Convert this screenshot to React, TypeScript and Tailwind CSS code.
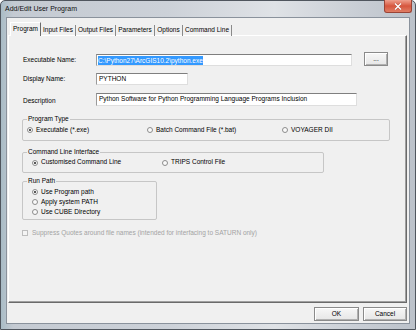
import React from 'react';

const tabs: [string, number][] = [
  ['Program', 31],
  ['Input Files', 35],
  ['Output Files', 40],
  ['Parameters', 39],
  ['Options', 28],
  ['Command Line', 49],
];

const Radio = ({
  checked = false,
  label,
  className = '',
}: {
  checked?: boolean;
  label: string;
  className?: string;
}) => (
  <div className={`flex items-center ${className}`}>
    <span className="flex h-[6px] w-[6px] shrink-0 items-center justify-center rounded-full border border-[#8c8c8c] bg-[#fafafa]">
      {checked && <span className="h-[2px] w-[2px] rounded-full bg-[#222]" />}
    </span>
    <span className="ml-[3px] leading-none">{label}</span>
  </div>
);

const GroupBox = ({
  title,
  className = '',
  children,
}: {
  title: string;
  className?: string;
  children: React.ReactNode;
}) => (
  <div className={`relative rounded-[2px] border border-[#c6c6c6] ${className}`}>
    <span className="absolute left-[4px] top-[-4px] bg-[#f0f0f0] px-[1px] leading-none">{title}</span>
    {children}
  </div>
);

const fieldBorder =
  'border border-t-[#7f7f7f] border-l-[#9a9a9a] border-r-[#dedede] border-b-[#dedede] bg-white';

const buttonStyle =
  'flex items-center justify-center border border-[#8a8a8a] bg-[linear-gradient(180deg,#f7f7f7,#e6e6e6)] shadow-[inset_1px_1px_#ffffff,inset_-1px_-1px_#b0b0b0]';

export default function App() {
  return (
    <div className="font-['Liberation_Sans',Arial,sans-serif] text-[6.5px] text-black">
      <div className="flex h-[330px] w-[416px] flex-col rounded-t-[5px] border border-[#50565e] bg-[linear-gradient(90deg,#a9bcc6_0%,#c4cad2_3%,#ccd1d8_40%,#dfe2e6_66%,#c9ced5_86%,#bcc2ca_100%)]">
        {/* Title bar */}
        <div className="flex h-[16px] shrink-0 items-start justify-between pl-[4px] pr-[3px]">
          <span className="mt-[4px] text-[7px] leading-none text-[#111]">Add/Edit User Program</span>
          <div className="-mt-px flex h-[13px] w-[28px] items-center justify-center rounded-b-[3px] border border-t-0 border-[#9a4436] bg-[#d9573f] bg-linear-to-b from-[#eea08e] via-[#d6553d] to-[#e07d64]">
            <svg width="8" height="7" viewBox="0 0 8 7">
              <path d="M1 0.5 L7 6.5 M7 0.5 L1 6.5" stroke="#8a3426" strokeWidth="2.2" strokeOpacity="0.5" />
              <path d="M1 0.5 L7 6.5 M7 0.5 L1 6.5" stroke="#ffffff" strokeWidth="1.4" />
            </svg>
          </div>
        </div>

        {/* Client area */}
        <div className="mx-[5px] mb-[5px] flex flex-1 flex-col border border-[#8a929c] bg-[#f0f0f0] pb-[2px] pl-px pr-[2px] pt-[4px]">
          {/* Tabs */}
          <div className="relative z-10 -mb-px flex h-[14px] items-end pl-[2px]">
            {tabs.map(([name, w], i) =>
              i === 0 ? (
                <div
                  key={name}
                  style={{ width: w }}
                  className="flex h-[14px] items-center justify-center border border-b-0 border-l-white border-t-white border-r-[#6a6a6a] bg-[#f0f0f0] pb-[1px]"
                >
                  {name}
                </div>
              ) : (
                <div
                  key={name}
                  style={{ width: w }}
                  className="flex h-[11px] items-center justify-center border-r border-[#8a8a8a] pb-[1px]"
                >
                  {name}
                </div>
              )
            )}
          </div>

          {/* Panel */}
          <div className="flex h-[268px] flex-col border border-b-[#6a6a6a] border-l-white border-r-[#6a6a6a] border-t-white pl-[13px] shadow-[inset_-1px_-1px_#a0a0a0]">
            <div className="mt-[16px] flex h-[14px] items-center">
              <span className="ml-px w-[73px] pt-[3px] leading-none">Executable Name:</span>
              <div className={`${fieldBorder} mt-[2px] flex h-[12px] w-[256px] items-center pl-px`}>
                <span className="bg-[#3399ff] leading-[9px] text-white">C:\Python27\ArcGIS10.2\python.exe</span>
              </div>
              <div className={`${buttonStyle} ml-[12px] h-[14px] w-[24px] leading-none`}>...</div>
            </div>

            <div className="mt-[7px] flex h-[12px] items-center">
              <span className="ml-px w-[73px] leading-none">Display Name:</span>
              <div className={`${fieldBorder} flex h-[12px] w-[92px] items-center pl-[2px] leading-none`}>PYTHON</div>
            </div>

            <div className="mt-[8px] flex h-[13px] items-center">
              <span className="ml-px w-[73px] pt-[3px] leading-none">Description</span>
              <div className={`${fieldBorder} flex h-[13px] w-[261px] items-center pl-[2px] leading-none`}>
                Python Software for Python Programming Language Programs Inclusion
              </div>
            </div>

            <GroupBox title="Program Type" className="mt-[13px] flex h-[22px] w-[368px] items-center pl-[4px]">
              <Radio checked label="Executable (*.exe)" className="w-[120px]" />
              <Radio label="Batch Command File (*.bat)" className="w-[135px]" />
              <Radio label="VOYAGER DII" />
            </GroupBox>

            <GroupBox title="Command Line Interface" className="mt-[11px] flex h-[21px] w-[302px] items-center pl-[9px]">
              <Radio checked label="Customised Command Line" className="w-[130px]" />
              <Radio label="TRIPS Control File" />
            </GroupBox>

            <GroupBox title="Run Path" className="mt-[8px] flex h-[39px] w-[135px] flex-col pl-[9px] pt-[5px]">
              <Radio checked label="Use Program path" className="h-[10px]" />
              <Radio label="Apply system PATH" className="h-[10px]" />
              <Radio label="Use CUBE Directory" className="h-[10px]" />
            </GroupBox>

            <div className="mt-[9px] flex h-[8px] items-center text-[#a3a3a3]">
              <span className="h-[6px] w-[6px] border border-[#bdbdbd] bg-[#f4f4f4]" />
              <span className="ml-[4px] leading-none">
                Suppress Quotes around file names (intended for interfacing to SATURN only)
              </span>
            </div>
          </div>

          {/* Buttons */}
          <div className="mt-[4px] flex justify-end gap-[4px]">
            <div className={`${buttonStyle} h-[14px] w-[45px] leading-none`}>OK</div>
            <div className={`${buttonStyle} h-[14px] w-[44px] leading-none`}>Cancel</div>
          </div>
        </div>
      </div>
    </div>
  );
}
